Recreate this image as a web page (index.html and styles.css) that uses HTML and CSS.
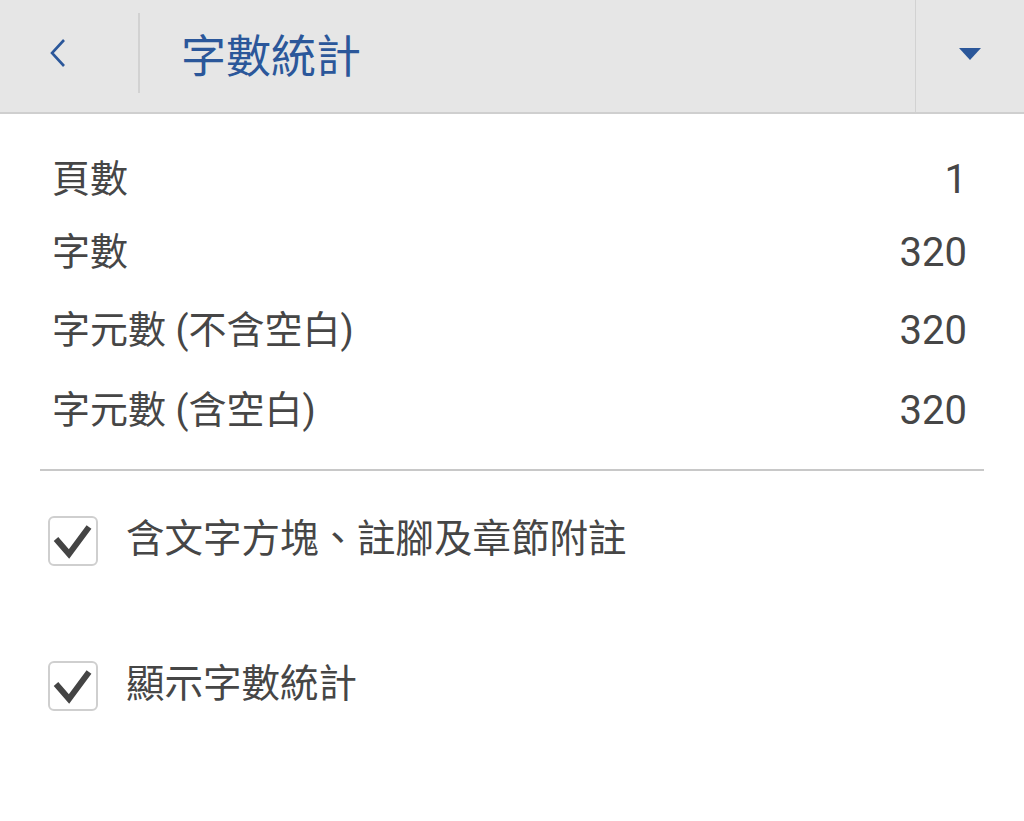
FILE: index.html
```html
<!DOCTYPE html>
<html lang="zh-Hant">
<head>
    <meta charset="UTF-8">
    <meta name="viewport" content="width=device-width, initial-scale=1.0">
    <title>字數統計</title>
    <link rel="stylesheet" href="styles.css">
</head>
<body>
    <header class="topbar">
        <button class="back-btn" aria-label="返回">
            <svg width="17" height="30" viewBox="0 0 17 30">
                <path d="M15 2 L3 15 L15 28" fill="none" stroke="#2b579a" stroke-width="2.6"/>
            </svg>
        </button>
        <h1 class="title">字數統計</h1>
        <button class="menu-btn" aria-label="選單">
            <svg width="22" height="12" viewBox="0 0 22 12">
                <path d="M0 0 L22 0 L11 12 Z" fill="#2b579a"/>
            </svg>
        </button>
    </header>

    <div class="stats">
        <div class="row"><span class="label">頁數</span><span class="num">1</span></div>
        <div class="row"><span class="label">字數</span><span class="num">320</span></div>
        <div class="row"><span class="label">字元數 (不含空白)</span><span class="num">320</span></div>
        <div class="row"><span class="label">字元數 (含空白)</span><span class="num">320</span></div>
    </div>

    <hr class="divider">

    <div class="options">
        <label class="option">
            <span class="box">
                <svg width="46" height="46" viewBox="0 0 46 46">
                    <path d="M6 21 L19 36 L39 9" fill="none" stroke="#444" stroke-width="6"/>
                </svg>
            </span>
            <span class="label">含文字方塊、註腳及章節附註</span>
        </label>
        <label class="option">
            <span class="box">
                <svg width="46" height="46" viewBox="0 0 46 46">
                    <path d="M6 21 L19 36 L39 9" fill="none" stroke="#444" stroke-width="6"/>
                </svg>
            </span>
            <span class="label">顯示字數統計</span>
        </label>
    </div>
</body>
</html>
```

FILE: styles.css
```css
body {
    margin: 0;
    padding: 0;
    background-color: #fff;
    font-family: Roboto, "Noto Sans CJK TC", sans-serif;
    color: #464646;
    height: 821px;
    overflow: hidden;
}
.topbar {
    display: flex;
    align-items: center;
    height: 112px;
    background-color: #e6e6e6;
    border-bottom: 2px solid #cfcfcf;
}
.back-btn {
    width: 140px;
    height: 80px;
    padding: 0 0 0 49px;
    margin-bottom: 6px;
    border: none;
    border-right: 2px solid #d2d2d2;
    background: none;
    display: flex;
    align-items: center;
}
.title {
    flex: 1;
    margin: 0 0 0 41px;
    padding-bottom: 6px;
    font-size: 45px;
    font-weight: normal;
    color: #2b579a;
}
.menu-btn {
    width: 109px;
    height: 112px;
    border: none;
    border-left: 1px solid #d2d2d2;
    background: none;
    display: flex;
    align-items: center;
    justify-content: center;
    padding: 0 0 4px 0;
}
.stats {
    padding: 29px 57px 0 52px;
}
.row {
    display: flex;
    justify-content: space-between;
    align-items: center;
    font-size: 38px;
    height: 75px;
}
.row:first-child {
    height: 72px;
}
.row:nth-child(n+3) {
    height: 80px;
}
.label {
    padding-bottom: 8px;
}
.num {
    font-size: 40px;
}
.divider {
    margin: 19px 40px 0 40px;
    border: none;
    border-top: 2px solid #c8c8c8;
}
.options {
    display: flex;
    flex-direction: column;
    gap: 95px;
    padding: 45px 0 0 48px;
}
.option {
    display: flex;
    align-items: center;
    gap: 28px;
    height: 50px;
    font-size: 38.5px;
}
.option .label {
    padding-bottom: 12px;
}
.box {
    width: 46px;
    height: 46px;
    border: 2px solid #cfcfcf;
    border-radius: 6px;
    display: flex;
    align-items: center;
    justify-content: center;
}
```
